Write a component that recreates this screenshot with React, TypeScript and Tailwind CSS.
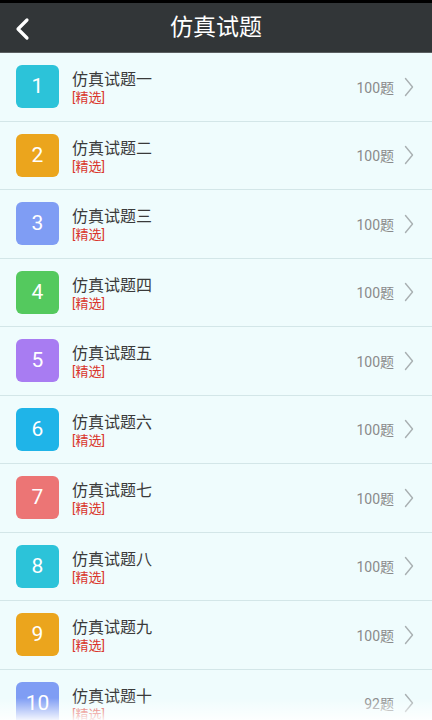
import React from "react";

const items = [
  { n: 1, name: "仿真试题一", count: "100题", color: "bg-[#2cc3d9]" },
  { n: 2, name: "仿真试题二", count: "100题", color: "bg-[#eba51d]" },
  { n: 3, name: "仿真试题三", count: "100题", color: "bg-[#7f9df4]" },
  { n: 4, name: "仿真试题四", count: "100题", color: "bg-[#54c95e]" },
  { n: 5, name: "仿真试题五", count: "100题", color: "bg-[#a87cf2]" },
  { n: 6, name: "仿真试题六", count: "100题", color: "bg-[#1fb4e8]" },
  { n: 7, name: "仿真试题七", count: "100题", color: "bg-[#ec7575]" },
  { n: 8, name: "仿真试题八", count: "100题", color: "bg-[#2cc3d9]" },
  { n: 9, name: "仿真试题九", count: "100题", color: "bg-[#eba51d]" },
  { n: 10, name: "仿真试题十", count: "92题", color: "bg-[#7f9df4]" },
];

const font = { fontFamily: 'Roboto, "Noto Sans CJK SC", sans-serif' };

export default function App() {
  return (
    <div className="w-[432px] h-[720px] overflow-hidden relative bg-[#effcfd] flex flex-col" style={font}>
      <div className="h-[3px] bg-black shrink-0" />
      <div className="h-[50px] shrink-0 bg-[#323638] flex items-center relative border-b border-[#5b5f61]">
        <svg className="absolute left-[13px] top-[14px]" width="18" height="24" viewBox="0 0 18 24">
          <path d="M14 3 L5 12 L14 21" fill="none" stroke="#ffffff" strokeWidth="3.2" strokeLinecap="round" strokeLinejoin="round" />
        </svg>
        <div className="flex-1 text-center text-white text-[23px] leading-none">仿真试题</div>
      </div>
      <div className="flex flex-col">
        {items.map((it) => (
          <div key={it.n} className="h-[68.5px] shrink-0 flex items-center border-b border-[#d3e6e8] pl-4 pr-[18px]">
            <div className={`w-[43px] h-[43px] rounded-[6px] ${it.color} flex items-center justify-center text-white text-[21px]`}>
              {it.n}
            </div>
            <div className="ml-[13px] mt-[3px] flex flex-col flex-1">
              <div className="text-[16px] leading-[19px] text-[#3a3a3a]">{it.name}</div>
              <div className="text-[13px] leading-[17px] text-[#d9342b]">[精选]</div>
            </div>
            <div className="text-[14px] leading-[18px] text-[#8a8a8a] mr-[10px] mt-[2px]">{it.count}</div>
            <svg width="10" height="20" viewBox="0 0 10 20">
              <path d="M1.5 1.5 L8.5 10 L1.5 18.5" fill="none" stroke="#a9b0b2" strokeWidth="1.4" strokeLinecap="round" strokeLinejoin="round" />
            </svg>
          </div>
        ))}
      </div>
      <div className="absolute left-0 right-0 bottom-0 h-[22px] bg-gradient-to-b from-[#effcfd]/0 to-[#ffffff]/90" />
    </div>
  );
}
